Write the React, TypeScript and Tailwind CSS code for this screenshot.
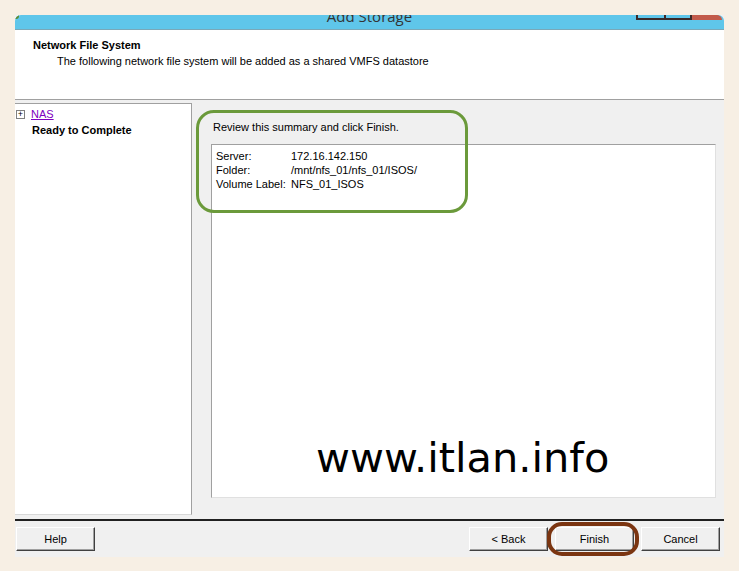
import React from "react";

const font = { fontFamily: '"Liberation Sans", Arial, sans-serif' };

function WinButton({ label }: { label: string }) {
  return (
    <button
      className="h-[24px] w-[79px] bg-[#f0f0f0] text-[11px] text-black border border-t-white border-l-white border-r-[#404040] border-b-[#404040] shadow-[inset_-1px_-1px_0_#a0a0a0]"
    >
      {label}
    </button>
  );
}

export default function App() {
  return (
    <div className="relative h-[571px] w-[739px] bg-[#f7efe4] px-[15px] pt-[15px] overflow-hidden" style={font}>
      <div className="w-[709px] h-[542px] bg-[#f0f0f0] flex flex-col">
        {/* title bar, top part clipped */}
        <div className="relative h-[15px] bg-[#5fc6ea] rounded-t-[6px] border-b border-[#7aa8b8] overflow-hidden flex justify-center">
          <span className="text-[15px] leading-none text-[#333] -mt-[6px]" style={{ fontFamily: '"Open Sans", sans-serif' }}>
            Add Storage
          </span>
          <div className="absolute left-0 top-0 w-[4px] h-[4px] bg-[#5a8a2a] rounded-br-[3px]" />
          <div className="absolute top-0 right-[2px] flex h-[5px]">
            <div className="w-[28px] border-l-2 border-b-2 border-[#3a2a2a]" />
            <div className="w-[26px] border-l-2 border-b-2 border-[#3a2a2a]" />
            <div className="w-[32px] bg-[#c25a4a] border-l-2 border-[#3a2a2a] rounded-tr-[6px]" />
          </div>
        </div>

        {/* header */}
        <div className="h-[70px] bg-white pl-[18px] pt-[8px] border-b border-[#a0a0a0]">
          <div className="text-[11px] font-bold text-black leading-[14px]">Network File System</div>
          <div className="text-[11px] text-black leading-[14px] pl-[24px] mt-[2px]">
            The following network file system will be added as a shared VMFS datastore
          </div>
        </div>

        {/* body */}
        <div className="flex h-[419px] pt-[3px]">
          <div className="w-[177px] h-[412px] bg-white border-t border-r border-b border-[#a0a0a0] border-b-[#d8d8d8] pt-[3px] pl-[1px]">
            <div className="flex items-center gap-[6px] h-[14px]">
              <div className="w-[9px] h-[9px] border border-[#808080] flex items-center justify-center text-[9px] leading-none text-black">
                +
              </div>
              <span className="text-[11px] text-[#8000c0] underline leading-[14px]">NAS</span>
            </div>
            <div className="text-[11px] font-bold text-black leading-[14px] pl-[16px] mt-[2px]">Ready to Complete</div>
          </div>
          <div className="flex-1 pl-[21px] pr-[8px] pt-[17px]">
            <div className="text-[11px] text-black leading-[14px]">Review this summary and click Finish.</div>
            <div className="mt-[10px] -ml-[2px] h-[354px] bg-white border border-t-[#a0a0a0] border-l-[#a0a0a0] border-r-[#e0e0e0] border-b-[#e0e0e0] pt-[4px] pl-[4px] flex flex-col">
              <div className="grid grid-cols-[75px_1fr] text-[11px] leading-[14px] text-black">
                <span>Server:</span>
                <span>172.16.142.150</span>
                <span>Folder:</span>
                <span>/mnt/nfs_01/nfs_01/ISOS/</span>
                <span>Volume Label:</span>
                <span>NFS_01_ISOS</span>
              </div>
              <div className="flex-1" />
              <div
                className="text-[41.5px] leading-none text-black pl-[100px] pb-[19px]"
                style={{ fontFamily: '"DejaVu Sans", sans-serif' }}
              >
                www.itlan.info
              </div>
            </div>
          </div>
        </div>

        {/* footer */}
        <div className="border-t-2 border-[#202020] flex items-start pt-[6px] pl-[1px] pr-[4px]">
          <WinButton label="Help" />
          <div className="flex-1" />
          <div className="flex gap-[7px]">
            <WinButton label="< Back" />
            <WinButton label="Finish" />
            <WinButton label="Cancel" />
          </div>
        </div>
      </div>

      {/* annotations */}
      <div className="absolute left-[196px] top-[110px] w-[272px] h-[103px] border-[3px] border-[#6b9a3b] rounded-[18px]" />
      <div className="absolute left-[547px] top-[522px] w-[92px] h-[34px] border-[4px] border-[#7b3511] rounded-[15px]" />
    </div>
  );
}
